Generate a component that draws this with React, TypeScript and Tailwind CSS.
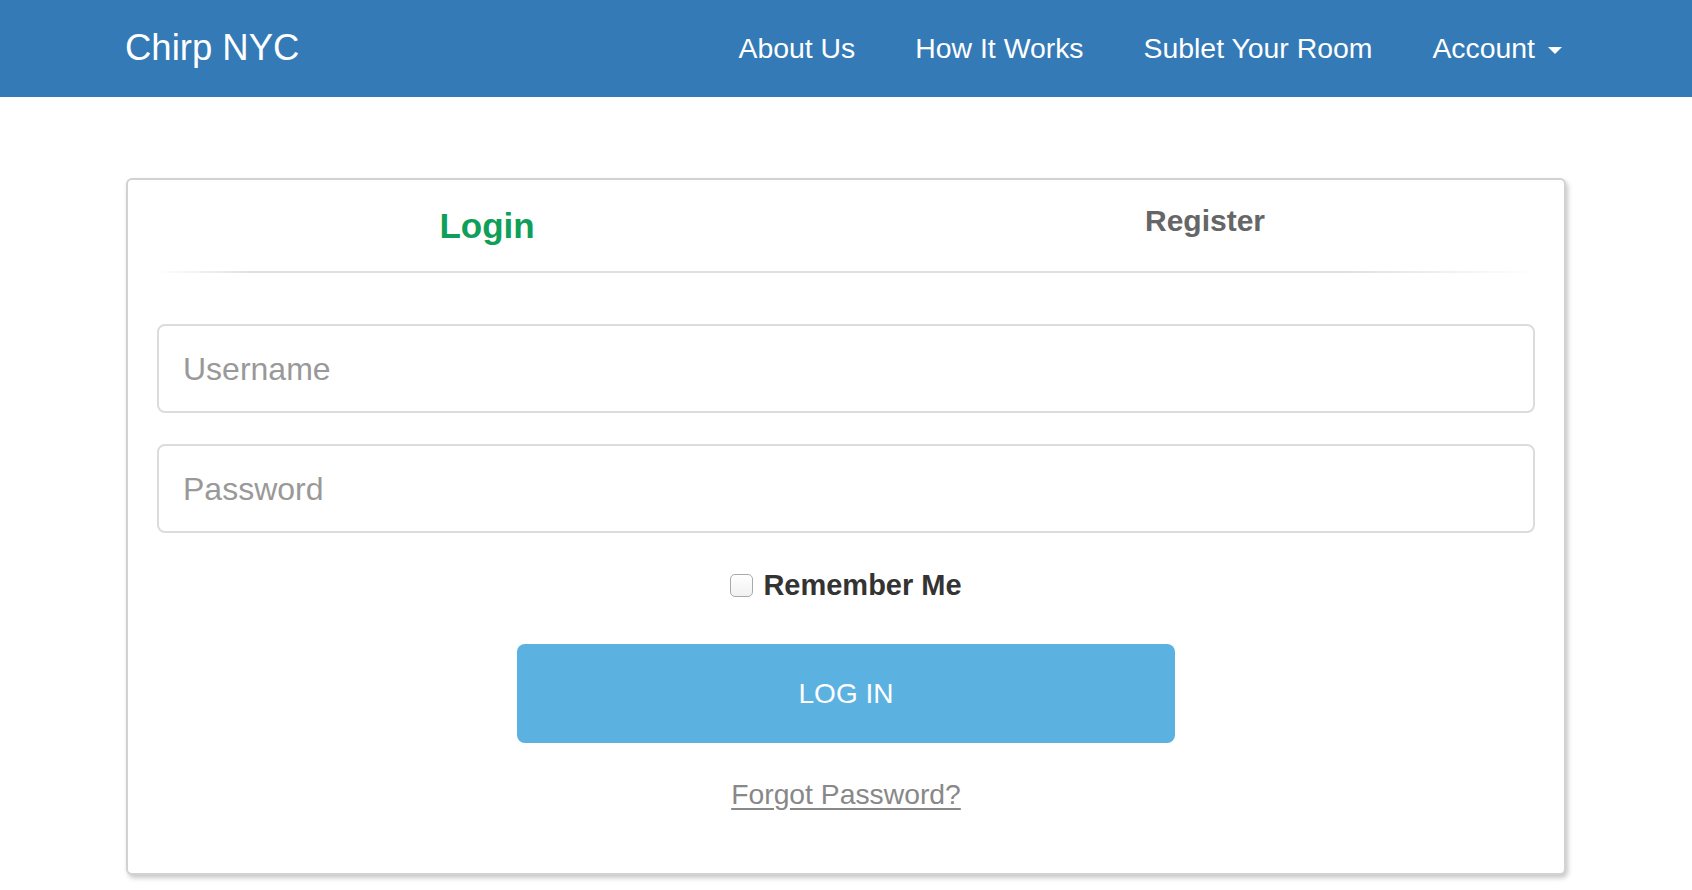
import React from "react";

const font = { fontFamily: '"Liberation Sans", Arial, Helvetica, sans-serif' };

export default function App() {
  return (
    <div className="min-h-[890px] bg-white" style={font}>
      <nav className="h-[97px] bg-[#337ab7] flex items-center justify-between pl-[125px] pr-[130px] text-white">
        <div className="text-[36.5px] leading-none">Chirp NYC</div>
        <ul className="flex items-center gap-[60px] text-[28.4px] leading-none">
          <li>About Us</li>
          <li>How It Works</li>
          <li>Sublet Your Room</li>
          <li className="flex items-center">
            Account
            <span className="ml-[13px] mt-[3px] w-0 h-0 border-t-[7px] border-t-white border-x-[7px] border-x-transparent" />
          </li>
        </ul>
      </nav>

      <div className="mx-[126px] mt-[81px] border-2 border-[#d2d2d2] rounded-[6px] bg-white shadow-[2px_3px_5px_rgba(0,0,0,0.22)]">
        <div className="grid grid-cols-2 h-[91px]">
          <div className="flex items-center justify-center">
            <span className="text-[35px] font-bold text-[#0f9f58] leading-none">Login</span>
          </div>
          <div className="flex items-center justify-center pb-[9px]">
            <span className="text-[30px] font-bold text-[#666666] leading-none">Register</span>
          </div>
        </div>
        <div className="mx-[28px] h-[2px] bg-[linear-gradient(to_right,rgba(224,224,224,0)_0%,#e0e0e0_7%,#e0e0e0_86%,rgba(224,224,224,0)_100%)]" />

        <div className="px-[29px] pt-[51px] pb-[63px] flex flex-col">
          <div className="h-[89px] border-2 border-[#dcdcdc] rounded-[8px] flex items-center pl-[24px] text-[32px] text-[#999999]">
            Username
          </div>
          <div className="mt-[31px] h-[89px] border-2 border-[#dcdcdc] rounded-[8px] flex items-center pl-[24px] text-[32px] text-[#999999]">
            Password
          </div>

          <div className="mt-[40px] h-[24px] flex items-center justify-center">
            <span className="w-[23px] h-[23px] rounded-[5px] border border-[#a9a9a9] bg-[linear-gradient(#ffffff,#f1f1f1)]" />
            <span className="ml-[10px] text-[29px] font-bold text-[#333333] leading-none">Remember Me</span>
          </div>

          <button className="mt-[47px] mx-auto w-[658px] h-[99px] rounded-[8px] bg-[#5bb1e0] text-white text-[28px] leading-none">
            LOG IN
          </button>

          <div className="mt-[35px] h-[32px] flex items-center justify-center">
            <span className="text-[28.3px] leading-none text-[#888888] underline underline-offset-[4px]">Forgot Password?</span>
          </div>
        </div>
      </div>
    </div>
  );
}
